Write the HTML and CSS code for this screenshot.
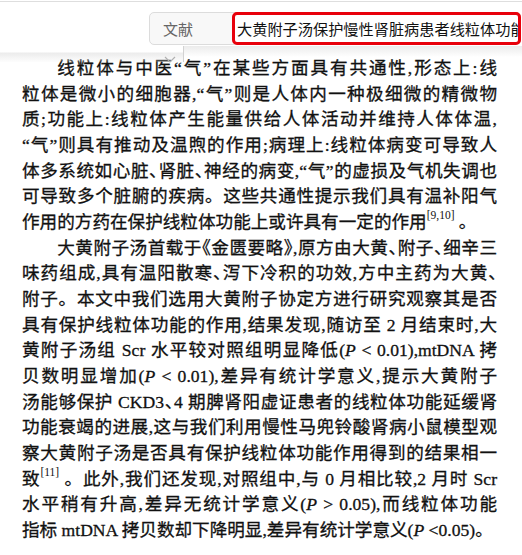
FILE: index.html
```html
<!DOCTYPE html>
<html lang="zh-CN">
<head>
<meta charset="utf-8">
<title>文献</title>
<link rel="stylesheet" href="styles.css">
</head>
<body>
<div class="page">
  <header class="toolbar">
    <div class="search">
      <div class="scope">文献</div>
      <div class="query">大黄附子汤保护慢性肾脏病患者线粒体功能延缓肾功能衰竭的临床研究</div>
    </div>
    <div class="shade"></div>
    <div class="tab">
      <svg class="chev" width="12" height="7" viewBox="0 0 12 7"><polyline points="1,1 6,6 11,1" fill="none" stroke="#b0b0b0" stroke-width="1.2"/></svg>
    </div>
  </header>
  <article class="text" lang="zh-CN">
    <div class="ln ind">线粒体与中医“气”在某些方面具有共通性,形态上:线</div>
    <div class="ln">粒体是微小的细胞器,“气”则是人体内一种极细微的精微物</div>
    <div class="ln">质;功能上:线粒体产生能量供给人体活动并维持人体体温,</div>
    <div class="ln">“气”则具有推动及温煦的作用;病理上:线粒体病变可导致人</div>
    <div class="ln">体多系统如心脏<span class="hw">、</span>肾脏<span class="hw">、</span>神经的病变,“气”的虚损及气机失调也</div>
    <div class="ln">可导致多个脏腑的疾病。这些共通性提示我们具有温补阳气</div>
    <div class="ln end">作用的方药在保护线粒体功能上或许具有一定的作用<sup class="ref">[9,10]</sup> 。</div>
    <div class="ln ind">大黄附子汤首载于<span class="hw">《</span>金匮要略<span class="hw">》</span>,原方由大黄<span class="hw">、</span>附子<span class="hw">、</span>细辛三</div>
    <div class="ln">味药组成,具有温阳散寒<span class="hw">、</span>泻下冷积的功效,方中主药为大黄<span class="hw">、</span></div>
    <div class="ln">附子。本文中我们选用大黄附子协定方进行研究观察其是否</div>
    <div class="ln">具有保护线粒体功能的作用,结果发现,随访至 2 月结束时,大</div>
    <div class="ln">黄附子汤组 Scr 水平较对照组明显降低(<i>P</i> &lt; 0.01),mtDNA 拷</div>
    <div class="ln">贝数明显增加(<i>P</i> &lt; 0.01),差异有统计学意义,提示大黄附子</div>
    <div class="ln">汤能够保护 CKD3<span class="hw">、</span>4 期脾肾阳虚证患者的线粒体功能延缓肾</div>
    <div class="ln">功能衰竭的进展,这与我们利用慢性马兜铃酸肾病小鼠模型观</div>
    <div class="ln">察大黄附子汤是否具有保护线粒体功能作用得到的结果相一</div>
    <div class="ln">致<sup class="ref">[11]</sup> 。此外,我们还发现,对照组中,与 0 月相比较,2 月时 Scr</div>
    <div class="ln">水平稍有升高,差异无统计学意义(<i>P</i> &gt; 0.05),而线粒体功能</div>
    <div class="ln end">指标 mtDNA 拷贝数却下降明显,差异有统计学意义(<i>P</i> &lt;0.05)。</div>
  </article>
</div>
</body>
</html>
```

FILE: styles.css
```css
html, body {
  margin: 0;
  padding: 0;
  background: #ffffff;
}

.page {
  width: 522px;
  height: 555px;
  overflow: hidden;
  position: relative;
}

.toolbar {
  position: relative;
  margin-top: 1px;
  border-top: 1px solid #dedede;
  padding: 10px 0 11px;
}

.search {
  display: flex;
  margin-left: 149px;
  width: 372px;
  height: 33px;
  box-sizing: border-box;
  border: 1px solid #dcdcdc;
  border-radius: 5px;
  background: #f8f8f8;
}

.scope {
  width: 82px;
  box-sizing: border-box;
  padding-left: 13px;
  font: 15px/31px "Noto Sans CJK SC", sans-serif;
  color: #666666;
}

.query {
  flex: 1;
  min-width: 0;
  margin: -1px -1px -1px 0;
  border: 3px solid #e8000b;
  border-radius: 5px;
  background: #ffffff;
  padding-left: 2px;
  font: 15.2px/27px "Noto Sans CJK SC", sans-serif;
  color: #111111;
  white-space: nowrap;
  overflow: hidden;
}

.shade {
  position: absolute;
  left: 0;
  right: 0;
  top: 44px;
  height: 11px;
  background: linear-gradient(#ebebeb, rgba(255, 255, 255, 0));
  z-index: 2;
}

.tab {
  position: absolute;
  left: 0;
  top: 44px;
  width: 183px;
  height: 16px;
  border-right: 1px solid #d2d2d2;
  background: linear-gradient(#ffffff 0, #ffffff 6px, #ececec 7px, rgba(255, 255, 255, 0) 17px);
  z-index: 3;
}

.chev {
  position: absolute;
  left: 164px;
  top: 10px;
}

.text {
  padding: 0 25px 0 22px;
  font-family: "Liberation Serif", "Noto Sans CJK SC", serif;
  font-size: 17.6px;
  line-height: 25.67px;
  color: #111111;
  -webkit-text-stroke: 0.3px #111111;
}

.ln {
  text-align: justify;
  text-align-last: justify;
  white-space: nowrap;
}

.ln.ind {
  text-indent: 2em;
}

.ln.end {
  text-align-last: left;
}

.hw {
  font-feature-settings: "halt";
}

.ref {
  font-size: 11.5px;
  line-height: 0;
  vertical-align: 9px;
  -webkit-text-stroke: 0;
}
```
